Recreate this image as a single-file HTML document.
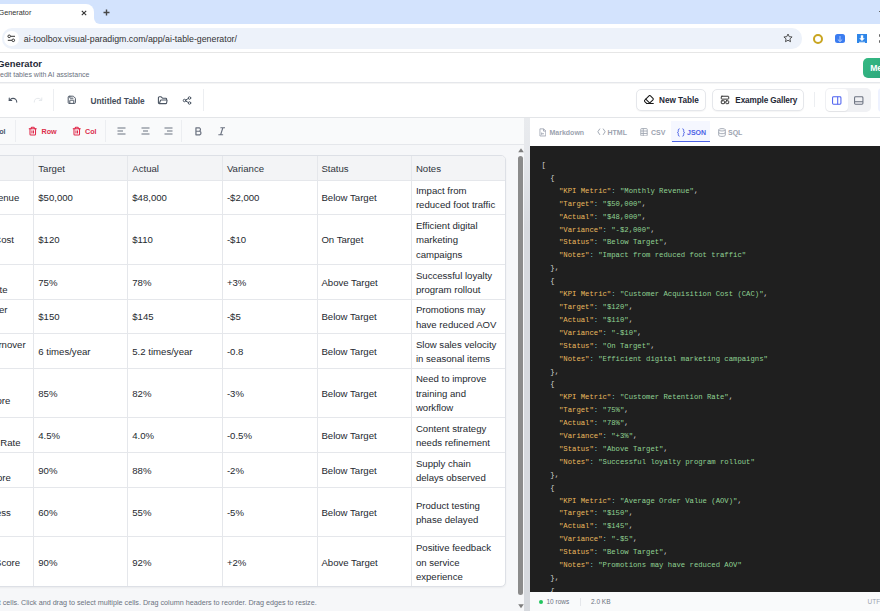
<!DOCTYPE html>
<html><head><meta charset="utf-8">
<style>
*{box-sizing:border-box;margin:0;padding:0}
html,body{width:880px;height:611px;overflow:hidden;background:#fff;font-family:"Liberation Sans",sans-serif}
.a{position:absolute}
svg{display:block}
/* chrome */
#tabstrip{left:0;top:0;width:880px;height:24px;background:#d3e3fd}
#tab{left:0;top:4px;width:94px;height:21px;background:#fff;border-radius:0 8px 0 0}
#toolbar{left:0;top:24px;width:880px;height:29px;background:#fff;border-bottom:1px solid #e6e6e6}
#omni{left:2px;top:28px;width:800px;height:20.8px;background:#edf2fa;border-radius:10px}
/* app header */
#hdr{left:0;top:53px;width:880px;height:30px;background:#fff;border-bottom:1px solid #e5e7eb;box-shadow:0 1px 1px rgba(0,0,0,.04)}
#tb{left:0;top:84px;width:880px;height:34px;background:#fff;border-bottom:1px solid #e3e5e8;box-shadow:0 1px 1px rgba(0,0,0,.04)}
.btn{position:absolute;top:89px;height:22px;border:1px solid #e5e7eb;border-radius:5px;background:#fff;box-shadow:0 1px 1px rgba(0,0,0,.04);font-weight:bold;font-size:8.2px;color:#1f2937}
.sep{position:absolute;width:1px;background:#eceef1}
/* left panel */
#left{left:0;top:118px;width:525px;height:494px;background:#f6f7f9}
#subtb{left:0;top:118px;width:525px;height:27px;background:#f9fafb;border-bottom:1px solid #e5e7eb}
#splitter{left:524px;top:118px;width:5.6px;height:493px;background:linear-gradient(180deg,#e9ebee 0,#e6e8ec 30px,#d6d9de 110px,#d6d9de 100%)}
#right{left:529.5px;top:118px;width:350.5px;height:493px;background:#fff}
#code{left:530px;top:146px;width:350px;height:446.5px;background:#1f1f1f;overflow:hidden}
#status{left:530px;top:592px;width:350px;height:19px;background:#f9fafb}
.tab2{position:absolute;top:121px;height:22px;font-size:7px;font-weight:bold;color:#9ca3af;white-space:nowrap}
/* table */
#tbl{left:-60px;top:155px;width:566px;height:432px;border:1px solid #dfe2e7;border-radius:5px;background:#fff;overflow:hidden}
.cell{position:absolute;font-size:9.6px;color:#25292f;line-height:14.6px;padding-left:3.9px;padding-top:1.2px;display:flex;align-items:center;white-space:nowrap}
.hline{position:absolute;left:0;width:566px;height:1px;background:#e5e7eb}
.vline{position:absolute;top:0;width:1px;height:432px;background:#e5e7eb}
pre{font-family:"Liberation Mono",monospace;font-size:7.25px;line-height:12.9px;color:#d4d4d4}
.k{color:#eab95e}.s{color:#8fd293}.p{color:#7cc0c0}
</style></head><body>
<div class="a" id="tabstrip"></div>
<div class="a" id="tab"></div>
<div class="a" style="left:-1.5px;top:8.2px;font-size:7.3px;color:#333">Generator</div>
<div class="a" style="left:93px;top:16px;width:10px;height:9px;background:#fff"></div><div class="a" style="left:94px;top:4px;width:12px;height:20px;background:#d3e3fd;border-radius:0 0 0 6px"></div>
<div class="a" id="toolbar"></div>
<div class="a" id="omni"></div>
<div class="a" style="left:23.75px;top:32.7px;font-size:8.8px;color:#333;line-height:12px;white-space:nowrap">ai-toolbox.visual-paradigm.com/app/ai-table-generator/</div>

<div class="a" id="hdr"></div>
<div class="a" style="left:-2.8px;top:58.4px;font-size:9.4px;font-weight:bold;color:#1f2937">Generator</div>
<div class="a" style="left:0;top:70.6px;font-size:7px;color:#6b7280">edit tables with AI assistance</div>
<div class="a" style="left:863px;top:58px;width:40px;height:19.5px;border-radius:5px;background:linear-gradient(135deg,#34b982,#2a9f7c)"></div>
<div class="a" style="left:870.2px;top:62.9px;font-size:8.6px;font-weight:bold;color:#fff">Me</div>

<div class="a" id="tb"></div>
<div class="sep" style="left:53px;top:89px;height:22px"></div>
<div class="a" style="left:90.5px;top:96.3px;font-size:8.3px;font-weight:bold;color:#454d5a">Untitled Table</div>
<div class="sep" style="left:203px;top:89px;height:22px"></div>
<div class="btn" style="left:636px;width:70px"><span class="a" style="left:22px;top:5.6px">New Table</span></div>
<div class="btn" style="left:712px;width:92px"><span class="a" style="left:22.3px;top:5.6px;letter-spacing:-0.12px">Example Gallery</span></div>
<div class="sep" style="left:814px;top:92px;height:15px"></div>
<div class="a" style="left:825px;top:88px;width:46px;height:24px;border-radius:5px;background:#f0f1f4"></div>
<div class="a" style="left:826px;top:89px;width:22px;height:22px;border-radius:4px;background:#fff;box-shadow:0 1px 1px rgba(0,0,0,.06)"></div>

<div class="a" id="left"></div>
<div class="a" id="subtb"></div>
<div class="sep" style="left:15px;top:120px;height:22px"></div>
<div class="sep" style="left:105px;top:120px;height:22px"></div>
<div class="sep" style="left:181px;top:120px;height:22px"></div>
<div class="a" style="left:-6px;top:127.3px;font-size:7.2px;font-weight:bold;color:#475569">Col</div>
<div class="a" style="left:41.5px;top:127.3px;font-size:7.2px;font-weight:bold;color:#dc2f4c">Row</div>
<div class="a" style="left:85px;top:127.3px;font-size:7.2px;font-weight:bold;color:#dc2f4c">Col</div>

<div class="a" style="left:-61.0px;top:155.0px;width:567.1px;height:432.2px;border:1px solid #dde0e6;border-radius:5px;background:#fff;overflow:hidden;box-shadow:0 1px 2px rgba(0,0,0,.05)">
<div class="a" style="left:0;top:0;width:600px;height:24.6px;background:#f3f4f6"></div>
<div class="a" style="left:0;top:23.6px;width:600px;height:1px;background:#e5e7eb"></div>
<div class="a" style="left:0;top:58.0px;width:600px;height:1px;background:#e5e7eb"></div>
<div class="a" style="left:0;top:108.0px;width:600px;height:1px;background:#e5e7eb"></div>
<div class="a" style="left:0;top:143.0px;width:600px;height:1px;background:#e5e7eb"></div>
<div class="a" style="left:0;top:177.2px;width:600px;height:1px;background:#e5e7eb"></div>
<div class="a" style="left:0;top:212.0px;width:600px;height:1px;background:#e5e7eb"></div>
<div class="a" style="left:0;top:261.2px;width:600px;height:1px;background:#e5e7eb"></div>
<div class="a" style="left:0;top:296.2px;width:600px;height:1px;background:#e5e7eb"></div>
<div class="a" style="left:0;top:331.2px;width:600px;height:1px;background:#e5e7eb"></div>
<div class="a" style="left:0;top:380.2px;width:600px;height:1px;background:#e5e7eb"></div>
<div class="a" style="left:93.4px;top:0;width:1px;height:600px;background:#e5e7eb"></div>
<div class="a" style="left:187.4px;top:0;width:1px;height:600px;background:#e5e7eb"></div>
<div class="a" style="left:282.0px;top:0;width:1px;height:600px;background:#e5e7eb"></div>
<div class="a" style="left:376.5px;top:0;width:1px;height:600px;background:#e5e7eb"></div>
<div class="a" style="left:471.0px;top:0;width:1px;height:600px;background:#e5e7eb"></div>
<div class="a cell" style="left:0.0px;top:0.0px;width:94.4px;height:24.6px;color:#30353d;padding-top:2px">KPI Metric</div>
<div class="a cell" style="left:94.4px;top:0.0px;width:94.0px;height:24.6px;color:#30353d;padding-top:2px">Target</div>
<div class="a cell" style="left:188.4px;top:0.0px;width:94.6px;height:24.6px;color:#30353d;padding-top:2px">Actual</div>
<div class="a cell" style="left:283.0px;top:0.0px;width:94.5px;height:24.6px;color:#30353d;padding-top:2px">Variance</div>
<div class="a cell" style="left:377.5px;top:0.0px;width:94.5px;height:24.6px;color:#30353d;padding-top:2px">Status</div>
<div class="a cell" style="left:472.0px;top:0.0px;width:94.6px;height:24.6px;color:#30353d;padding-top:2px">Notes</div>
<div class="a cell" style="left:94.4px;top:24.6px;width:94.0px;height:34.4px;">$50,000</div>
<div class="a cell" style="left:188.4px;top:24.6px;width:94.6px;height:34.4px;">$48,000</div>
<div class="a cell" style="left:283.0px;top:24.6px;width:94.5px;height:34.4px;">-$2,000</div>
<div class="a cell" style="left:377.5px;top:24.6px;width:94.5px;height:34.4px;">Below Target</div>
<div class="a cell" style="left:472.0px;top:24.6px;width:94.6px;height:34.4px;">Impact from<br>reduced foot traffic</div>
<div class="a" style="right:485.8px;top:35.2px;font-size:9.6px;line-height:14.6px;color:#25292f;white-space:nowrap">Monthly Revenue</div>
<div class="a cell" style="left:94.4px;top:59.0px;width:94.0px;height:50.0px;">$120</div>
<div class="a cell" style="left:188.4px;top:59.0px;width:94.6px;height:50.0px;">$110</div>
<div class="a cell" style="left:283.0px;top:59.0px;width:94.5px;height:50.0px;">-$10</div>
<div class="a cell" style="left:377.5px;top:59.0px;width:94.5px;height:50.0px;">On Target</div>
<div class="a cell" style="left:472.0px;top:59.0px;width:94.6px;height:50.0px;">Efficient digital<br>marketing<br>campaigns</div>
<div class="a" style="right:491.1px;top:77.3px;font-size:9.6px;line-height:14.6px;color:#25292f;white-space:nowrap">Acquisition Cost</div>
<div class="a cell" style="left:94.4px;top:109.0px;width:94.0px;height:35.0px;">75%</div>
<div class="a cell" style="left:188.4px;top:109.0px;width:94.6px;height:35.0px;">78%</div>
<div class="a cell" style="left:283.0px;top:109.0px;width:94.5px;height:35.0px;">+3%</div>
<div class="a cell" style="left:377.5px;top:109.0px;width:94.5px;height:35.0px;">Above Target</div>
<div class="a cell" style="left:472.0px;top:109.0px;width:94.6px;height:35.0px;">Successful loyalty<br>program rollout</div>
<div class="a" style="right:497.6px;top:127.1px;font-size:9.6px;line-height:14.6px;color:#25292f;white-space:nowrap">Retention Rate</div>
<div class="a cell" style="left:94.4px;top:144.0px;width:94.0px;height:34.2px;">$150</div>
<div class="a cell" style="left:188.4px;top:144.0px;width:94.6px;height:34.2px;">$145</div>
<div class="a cell" style="left:283.0px;top:144.0px;width:94.5px;height:34.2px;">-$5</div>
<div class="a cell" style="left:377.5px;top:144.0px;width:94.5px;height:34.2px;">Below Target</div>
<div class="a cell" style="left:472.0px;top:144.0px;width:94.6px;height:34.2px;">Promotions may<br>have reduced AOV</div>
<div class="a" style="right:497.6px;top:147.2px;font-size:9.6px;line-height:14.6px;color:#25292f;white-space:nowrap">Average Order</div>
<div class="a cell" style="left:94.4px;top:178.2px;width:94.0px;height:34.8px;">6 times/year</div>
<div class="a cell" style="left:188.4px;top:178.2px;width:94.6px;height:34.8px;">5.2 times/year</div>
<div class="a cell" style="left:283.0px;top:178.2px;width:94.5px;height:34.8px;">-0.8</div>
<div class="a cell" style="left:377.5px;top:178.2px;width:94.5px;height:34.8px;">Below Target</div>
<div class="a cell" style="left:472.0px;top:178.2px;width:94.6px;height:34.8px;">Slow sales velocity<br>in seasonal items</div>
<div class="a" style="right:479.5px;top:181.7px;font-size:9.6px;line-height:14.6px;color:#25292f;white-space:nowrap">Inventory Turnover</div>
<div class="a cell" style="left:94.4px;top:213.0px;width:94.0px;height:49.2px;">85%</div>
<div class="a cell" style="left:188.4px;top:213.0px;width:94.6px;height:49.2px;">82%</div>
<div class="a cell" style="left:283.0px;top:213.0px;width:94.5px;height:49.2px;">-3%</div>
<div class="a cell" style="left:377.5px;top:213.0px;width:94.5px;height:49.2px;">Below Target</div>
<div class="a cell" style="left:472.0px;top:213.0px;width:94.6px;height:49.2px;">Need to improve<br>training and<br>workflow</div>
<div class="a" style="right:494.7px;top:238.2px;font-size:9.6px;line-height:14.6px;color:#25292f;white-space:nowrap">Satisfaction Score</div>
<div class="a cell" style="left:94.4px;top:262.2px;width:94.0px;height:35.0px;">4.5%</div>
<div class="a cell" style="left:188.4px;top:262.2px;width:94.6px;height:35.0px;">4.0%</div>
<div class="a cell" style="left:283.0px;top:262.2px;width:94.5px;height:35.0px;">-0.5%</div>
<div class="a cell" style="left:377.5px;top:262.2px;width:94.5px;height:35.0px;">Below Target</div>
<div class="a cell" style="left:472.0px;top:262.2px;width:94.6px;height:35.0px;">Content strategy<br>needs refinement</div>
<div class="a" style="right:484.5px;top:280.3px;font-size:9.6px;line-height:14.6px;color:#25292f;white-space:nowrap">Churn Rate</div>
<div class="a cell" style="left:94.4px;top:297.2px;width:94.0px;height:35.0px;">90%</div>
<div class="a cell" style="left:188.4px;top:297.2px;width:94.6px;height:35.0px;">88%</div>
<div class="a cell" style="left:283.0px;top:297.2px;width:94.5px;height:35.0px;">-2%</div>
<div class="a cell" style="left:377.5px;top:297.2px;width:94.5px;height:35.0px;">Below Target</div>
<div class="a cell" style="left:472.0px;top:297.2px;width:94.6px;height:35.0px;">Supply chain<br>delays observed</div>
<div class="a" style="right:494.2px;top:315.3px;font-size:9.6px;line-height:14.6px;color:#25292f;white-space:nowrap">Delivery Score</div>
<div class="a cell" style="left:94.4px;top:332.2px;width:94.0px;height:49.0px;">60%</div>
<div class="a cell" style="left:188.4px;top:332.2px;width:94.6px;height:49.0px;">55%</div>
<div class="a cell" style="left:283.0px;top:332.2px;width:94.5px;height:49.0px;">-5%</div>
<div class="a cell" style="left:377.5px;top:332.2px;width:94.5px;height:49.0px;">Below Target</div>
<div class="a cell" style="left:472.0px;top:332.2px;width:94.6px;height:49.0px;">Product testing<br>phase delayed</div>
<div class="a" style="right:494.2px;top:350.1px;font-size:9.6px;line-height:14.6px;color:#25292f;white-space:nowrap">Readiness</div>
<div class="a cell" style="left:94.4px;top:381.2px;width:94.0px;height:50.4px;">90%</div>
<div class="a cell" style="left:188.4px;top:381.2px;width:94.6px;height:50.4px;">92%</div>
<div class="a cell" style="left:283.0px;top:381.2px;width:94.5px;height:50.4px;">+2%</div>
<div class="a cell" style="left:377.5px;top:381.2px;width:94.5px;height:50.4px;">Above Target</div>
<div class="a cell" style="left:472.0px;top:381.2px;width:94.6px;height:50.4px;">Positive feedback<br>on service<br>experience</div>
<div class="a" style="right:485.0px;top:399.8px;font-size:9.6px;line-height:14.6px;color:#25292f;white-space:nowrap">Satisfaction Score</div>
</div>


<svg class="a" style="left:28px;top:125.5px" width="9.5" height="11" viewBox="0 0 24 26" fill="none" stroke="#e0294a" stroke-width="2.6" stroke-linecap="round" stroke-linejoin="round"><path d="M3 6h18"/><path d="M19 6v14a2 2 0 0 1-2 2H7a2 2 0 0 1-2-2V6"/><path d="M8 6V4a2 2 0 0 1 2-2h4a2 2 0 0 1 2 2v2"/><path d="M10 11v6M14 11v6"/></svg>
<svg class="a" style="left:71.5px;top:125.5px" width="9.5" height="11" viewBox="0 0 24 26" fill="none" stroke="#e0294a" stroke-width="2.6" stroke-linecap="round" stroke-linejoin="round"><path d="M3 6h18"/><path d="M19 6v14a2 2 0 0 1-2 2H7a2 2 0 0 1-2-2V6"/><path d="M8 6V4a2 2 0 0 1 2-2h4a2 2 0 0 1 2 2v2"/><path d="M10 11v6M14 11v6"/></svg>
<svg class="a" style="left:117px;top:127px" width="9" height="8" viewBox="0 0 9 8" stroke="#6b7280" stroke-width="1.1"><path d="M0.5 1H8.5M0.5 4H6M0.5 7H8.5"/></svg>
<svg class="a" style="left:140.5px;top:127px" width="9" height="8" viewBox="0 0 9 8" stroke="#6b7280" stroke-width="1.1"><path d="M0.5 1H8.5M2 4H7M0.5 7H8.5"/></svg>
<svg class="a" style="left:163.5px;top:127px" width="9" height="8" viewBox="0 0 9 8" stroke="#6b7280" stroke-width="1.1"><path d="M0.5 1H8.5M3 4H8.5M0.5 7H8.5"/></svg>
<svg class="a" style="left:194.5px;top:127px" width="7.5" height="8.5" viewBox="0 0 8 9" fill="none" stroke="#6b7280" stroke-width="1.3" stroke-linejoin="round"><path d="M1 0.8H4.6a2 2 0 0 1 0 3.7H1zM1 4.5H5a2 2 0 0 1 0 3.8H1z"/></svg>
<svg class="a" style="left:217.5px;top:127px" width="7.5" height="8.5" viewBox="0 0 8 9" fill="none" stroke="#6b7280" stroke-width="1.2" stroke-linecap="round"><path d="M3 0.8H7.2M0.8 8.2H5M5.2 0.8L2.8 8.2"/></svg>

<svg class="a" style="left:518px;top:148px" width="6" height="4.5" viewBox="0 0 6 4.5"><path d="M3 0.2L5.8 4.2H0.2z" fill="#7d7d7d"/></svg>
<div class="a" style="left:518.2px;top:156px;width:5.2px;height:439px;border-radius:2.6px;background:#8b8b8b"></div>
<svg class="a" style="left:518px;top:604px" width="6" height="4.5" viewBox="0 0 6 4.5"><path d="M0.2 0.2H5.8L3 4.2z" fill="#7d7d7d"/></svg>
<div class="a" style="left:-1.3px;top:597.9px;font-size:7.2px;color:#6b7280;white-space:nowrap">t cells. Click and drag to select multiple cells. Drag column headers to reorder. Drag edges to resize.</div>
<div class="a" id="splitter"></div>
<div class="a" id="right"></div>
<div class="a" style="left:671px;top:121px;width:39px;height:21px;background:#f5f7ff"></div>
<div class="a" style="left:671.5px;top:140.5px;width:38.5px;height:1.5px;background:#4c63e6"></div>
<div class="tab2" style="left:549.5px;top:128.8px">Markdown</div>
<div class="tab2" style="left:607.5px;top:128.8px">HTML</div>
<div class="tab2" style="left:651px;top:128.8px">CSV</div>
<div class="tab2" style="left:687px;top:128.8px;color:#4c63e6">JSON</div>
<div class="tab2" style="left:728px;top:128.8px">SQL</div>
<div class="a" id="code"><pre class="a" style="left:11.6px;top:13px">[
  {
    <span class="k">"KPI Metric"</span><span class="p">:</span> <span class="s">"Monthly Revenue"</span>,
    <span class="k">"Target"</span><span class="p">:</span> <span class="s">"$50,000"</span>,
    <span class="k">"Actual"</span><span class="p">:</span> <span class="s">"$48,000"</span>,
    <span class="k">"Variance"</span><span class="p">:</span> <span class="s">"-$2,000"</span>,
    <span class="k">"Status"</span><span class="p">:</span> <span class="s">"Below Target"</span>,
    <span class="k">"Notes"</span><span class="p">:</span> <span class="s">"Impact from reduced foot traffic"</span>
  },
  {
    <span class="k">"KPI Metric"</span><span class="p">:</span> <span class="s">"Customer Acquisition Cost (CAC)"</span>,
    <span class="k">"Target"</span><span class="p">:</span> <span class="s">"$120"</span>,
    <span class="k">"Actual"</span><span class="p">:</span> <span class="s">"$110"</span>,
    <span class="k">"Variance"</span><span class="p">:</span> <span class="s">"-$10"</span>,
    <span class="k">"Status"</span><span class="p">:</span> <span class="s">"On Target"</span>,
    <span class="k">"Notes"</span><span class="p">:</span> <span class="s">"Efficient digital marketing campaigns"</span>
  },
  {
    <span class="k">"KPI Metric"</span><span class="p">:</span> <span class="s">"Customer Retention Rate"</span>,
    <span class="k">"Target"</span><span class="p">:</span> <span class="s">"75%"</span>,
    <span class="k">"Actual"</span><span class="p">:</span> <span class="s">"78%"</span>,
    <span class="k">"Variance"</span><span class="p">:</span> <span class="s">"+3%"</span>,
    <span class="k">"Status"</span><span class="p">:</span> <span class="s">"Above Target"</span>,
    <span class="k">"Notes"</span><span class="p">:</span> <span class="s">"Successful loyalty program rollout"</span>
  },
  {
    <span class="k">"KPI Metric"</span><span class="p">:</span> <span class="s">"Average Order Value (AOV)"</span>,
    <span class="k">"Target"</span><span class="p">:</span> <span class="s">"$150"</span>,
    <span class="k">"Actual"</span><span class="p">:</span> <span class="s">"$145"</span>,
    <span class="k">"Variance"</span><span class="p">:</span> <span class="s">"-$5"</span>,
    <span class="k">"Status"</span><span class="p">:</span> <span class="s">"Below Target"</span>,
    <span class="k">"Notes"</span><span class="p">:</span> <span class="s">"Promotions may have reduced AOV"</span>
  },
  {
    <span class="k">"KPI Metric"</span><span class="p">:</span> <span class="s">"Inventory Turnover"</span>,
    <span class="k">"Target"</span><span class="p">:</span> <span class="s">"6 times/year"</span>,
    <span class="k">"Actual"</span><span class="p">:</span> <span class="s">"5.2 times/year"</span>,
    <span class="k">"Variance"</span><span class="p">:</span> <span class="s">"-0.8"</span>,
    <span class="k">"Status"</span><span class="p">:</span> <span class="s">"Below Target"</span>,
    <span class="k">"Notes"</span><span class="p">:</span> <span class="s">"Slow sales velocity in seasonal items"</span>
  },</pre></div>
<div class="a" id="status"></div>
<div class="a" style="left:539px;top:600px;width:4px;height:4px;border-radius:2px;background:#22c55e"></div>
<div class="a" style="left:546.5px;top:598px;font-size:6.5px;color:#6b7280">10 rows</div>
<div class="a" style="left:580px;top:598px;width:1px;height:8px;background:#e5e7eb"></div>
<div class="a" style="left:591px;top:598px;font-size:6.5px;color:#6b7280">2.0 KB</div>
<div class="a" style="left:867.5px;top:598px;font-size:6.5px;color:#9ca3af;white-space:nowrap">UTF-8</div>

<!-- chrome icons -->
<svg class="a" style="left:81px;top:9.5px" width="6" height="6" viewBox="0 0 6 6"><path d="M0.8 0.8L5.2 5.2M5.2 0.8L0.8 5.2" stroke="#333" stroke-width="1.1"/></svg>
<svg class="a" style="left:102.5px;top:8.5px" width="7" height="7" viewBox="0 0 7 7"><path d="M3.5 0.5V6.5M0.5 3.5H6.5" stroke="#474747" stroke-width="1.4"/></svg>
<div class="a" style="left:4px;top:31px;width:14.5px;height:14.5px;border-radius:50%;background:#fff"></div>
<svg class="a" style="left:7px;top:34px" width="9" height="9" viewBox="0 0 9 9"><circle cx="2.2" cy="2.3" r="1.3" fill="none" stroke="#333" stroke-width="1"/><path d="M3.8 2.3H8" stroke="#333" stroke-width="1"/><circle cx="6.3" cy="6.3" r="1.3" fill="none" stroke="#333" stroke-width="1"/><path d="M0.8 6.3H5" stroke="#333" stroke-width="1"/></svg>
<svg class="a" style="left:782.5px;top:33px" width="10" height="10" viewBox="0 0 24 24"><path d="M12 2.5l2.9 6.3 6.9.7-5.2 4.6 1.5 6.8L12 17.4l-6.1 3.5 1.5-6.8L2.2 9.5l6.9-.7z" fill="none" stroke="#444" stroke-width="2.2" stroke-linejoin="round"/></svg>
<div class="a" style="left:813px;top:33.5px;width:10px;height:10px;border-radius:50%;border:2.3px solid #c9a520"></div>
<div class="a" style="left:835px;top:33.5px;width:10px;height:9.5px;border-radius:2.5px;background:#3b7cf0"></div>
<svg class="a" style="left:835px;top:33.5px" width="10" height="10" viewBox="0 0 10 10"><path d="M5 2V7.5M2.8 5.5L5 7.6 7.2 5.5" fill="none" stroke="#cfe0ff" stroke-width="0.8"/></svg>
<div class="a" style="left:857px;top:33.5px;width:10px;height:9.5px;background:#2f86e8"></div>
<svg class="a" style="left:857px;top:33.5px" width="10" height="10" viewBox="0 0 10 10"><path d="M3.8 1.2H6.2V4.2H7.8L5 7 2.2 4.2H3.8z" fill="#fff"/><path d="M2 8.3H8" stroke="#fff" stroke-width="0.9"/></svg>
<div class="a" style="left:879px;top:34px;width:2.5px;height:3px;border-radius:1px;background:#666"></div>
<div class="a" style="left:879px;top:39.5px;width:2.5px;height:3px;border-radius:1px;background:#666"></div>
<div class="a" style="left:878.8px;top:10.8px;width:1.2px;height:1.6px;background:#666"></div>
<!-- app toolbar icons -->
<svg class="a" style="left:7.5px;top:95px" width="10" height="10" viewBox="0 0 24 24" fill="none" stroke="#4b5563" stroke-width="2.6" stroke-linecap="round" stroke-linejoin="round"><path d="M3 7v6h6"/><path d="M21 17a9 9 0 0 0-9-9 9 9 0 0 0-6 2.3L3 13"/></svg>
<svg class="a" style="left:32.5px;top:95px" width="10" height="10" viewBox="0 0 24 24" fill="none" stroke="#e3e6ea" stroke-width="2.2" stroke-linecap="round" stroke-linejoin="round"><path d="M21 7v6h-6"/><path d="M3 17a9 9 0 0 1 9-9 9 9 0 0 1 6 2.3l3 2.7"/></svg>
<svg class="a" style="left:66.6px;top:95px" width="9.6" height="9.6" viewBox="0 0 24 24" fill="none" stroke="#4b5563" stroke-width="2.5" stroke-linecap="round" stroke-linejoin="round"><path d="M15.2 3a2 2 0 0 1 1.4.6l3.8 3.8a2 2 0 0 1 .6 1.4V19a2 2 0 0 1-2 2H5a2 2 0 0 1-2-2V5a2 2 0 0 1 2-2z"/><path d="M17 21v-7a1 1 0 0 0-1-1H8a1 1 0 0 0-1 1v7"/><path d="M7 3v4a1 1 0 0 0 1 1h7"/></svg>
<svg class="a" style="left:157px;top:94.8px" width="11" height="10" viewBox="0 0 24 22" fill="none" stroke="#4b5563" stroke-width="2.4" stroke-linecap="round" stroke-linejoin="round"><path d="M5 19l2.76-7.35a1 1 0 0 1 .94-.65H21a1 1 0 0 1 .99 1.16l-1 5.21A2 2 0 0 1 19.03 19H5a2 2 0 0 1-2-2V6a2 2 0 0 1 2-2h4l3 3h7a2 2 0 0 1 2 2v2"/></svg>
<svg class="a" style="left:182px;top:94.5px" width="10" height="11" viewBox="0 0 24 24" fill="none" stroke="#4b5563" stroke-width="2.4" stroke-linecap="round" stroke-linejoin="round"><circle cx="6" cy="12" r="3"/><circle cx="18" cy="6" r="3"/><circle cx="18" cy="18" r="3"/><path d="M8.7 10.7l6.6-3.4M8.7 13.3l6.6 3.4"/></svg>
<svg class="a" style="left:643.7px;top:95.3px" width="10.2" height="9.4" viewBox="1 2 23 21" fill="none" stroke="#1a1a1a" stroke-width="2.4" stroke-linecap="round" stroke-linejoin="round"><path d="m7 21-4.3-4.3c-1-1-1-2.5 0-3.4l9.6-9.6c1-1 2.5-1 3.4 0l5.6 5.6c1 1 1 2.5 0 3.4L13 21"/><path d="M22 21H7"/><path d="m5 11 9 9"/></svg>
<svg class="a" style="left:719.5px;top:95px" width="10" height="9.5" viewBox="0 0 24 23" fill="none" stroke="#333" stroke-width="2.4" stroke-linecap="round" stroke-linejoin="round"><rect x="3" y="3" width="18" height="7" rx="1.5"/><rect x="3" y="14" width="8" height="7" rx="1.5"/><rect x="14" y="14" width="7" height="7" rx="1.5"/></svg>
<svg class="a" style="left:832px;top:95.5px" width="9.5" height="9" viewBox="0 0 10 9" fill="none" stroke="#4f63f0" stroke-width="1.1"><rect x="0.6" y="0.6" width="8.8" height="7.8" rx="1"/><path d="M6 0.6V8.4"/></svg>
<svg class="a" style="left:854px;top:95.5px" width="9.5" height="9" viewBox="0 0 10 9" fill="none" stroke="#6b7280" stroke-width="1.1"><rect x="0.6" y="0.6" width="8.8" height="7.8" rx="1"/><path d="M0.6 5.8H9.4"/></svg>
<div class="a" style="left:878px;top:88px;width:4px;height:24px;border-radius:4px 0 0 4px;background:#eef2ff"></div>

<svg class="a" style="left:538.5px;top:127.5px" width="7.5" height="9" viewBox="0 0 8 9" fill="none" stroke="#9ca3af" stroke-width="0.9" stroke-linejoin="round"><path d="M1 0.6H5L7.2 2.8V8.2H1z"/><path d="M4.8 0.6V3H7.2M2.8 4.5V7M2.8 5.8H5.3"/></svg>
<svg class="a" style="left:596.5px;top:128px" width="9" height="7.5" viewBox="0 0 9 8" fill="none" stroke="#9ca3af" stroke-width="1" stroke-linecap="round" stroke-linejoin="round"><path d="M2.6 1L0.6 4 2.6 7M6.4 1L8.4 4 6.4 7"/></svg>
<svg class="a" style="left:640px;top:127.5px" width="8" height="8.5" viewBox="0 0 8 9" fill="none" stroke="#9ca3af" stroke-width="0.9"><rect x="0.6" y="0.6" width="6.8" height="7.8" rx="0.8"/><path d="M0.6 3.2H7.4M0.6 5.8H7.4M3.2 0.6V8.4"/></svg>
<svg class="a" style="left:676.5px;top:127.5px" width="8" height="9" viewBox="0 0 8 9" fill="none" stroke="#4c63e6" stroke-width="1" stroke-linecap="round"><path d="M2.2 0.8C1 0.8 1.3 2.5 1.3 3.4 1.3 4 0.9 4.5 0.5 4.5 0.9 4.5 1.3 5 1.3 5.6 1.3 6.5 1 8.2 2.2 8.2M5.8 0.8C7 0.8 6.7 2.5 6.7 3.4 6.7 4 7.1 4.5 7.5 4.5 7.1 4.5 6.7 5 6.7 5.6 6.7 6.5 7 8.2 5.8 8.2"/></svg>
<svg class="a" style="left:718px;top:127.5px" width="8" height="9" viewBox="0 0 8 9" fill="none" stroke="#9ca3af" stroke-width="0.9"><ellipse cx="4" cy="1.8" rx="3.3" ry="1.2"/><path d="M0.7 1.8V7.2C0.7 8.8 7.3 8.8 7.3 7.2V1.8M0.7 4.5C0.7 6.1 7.3 6.1 7.3 4.5"/></svg>
</body></html>
